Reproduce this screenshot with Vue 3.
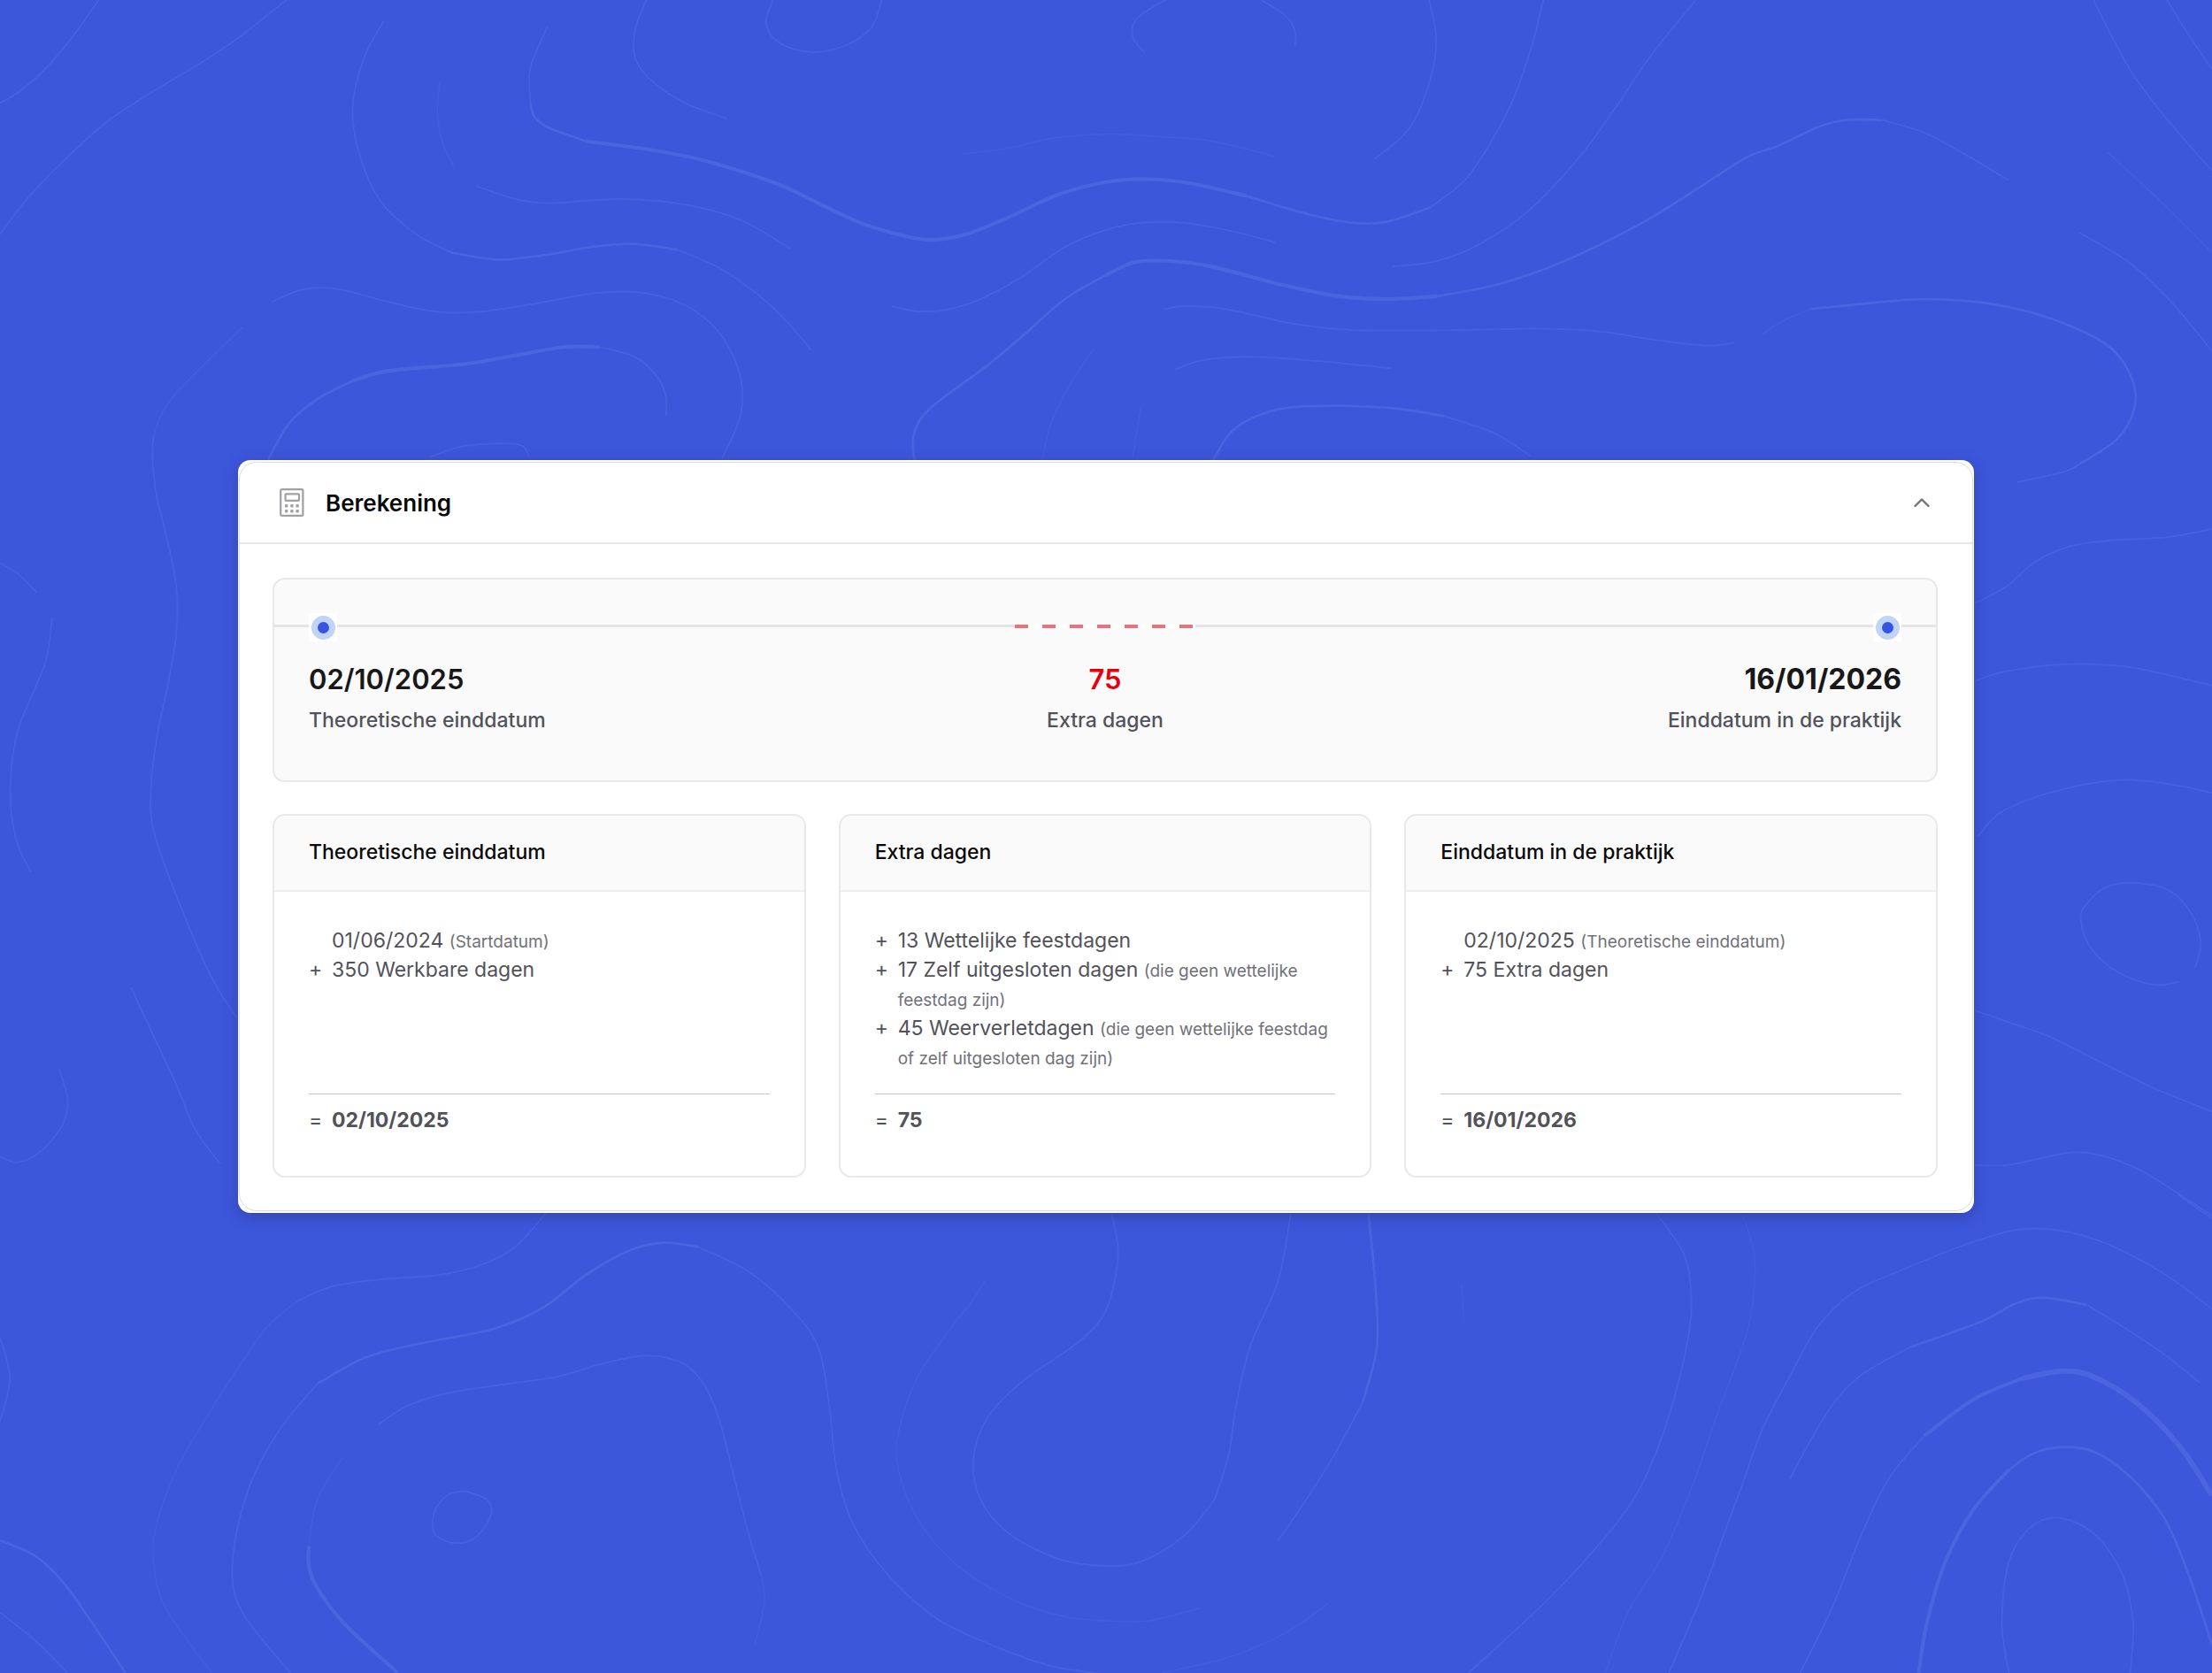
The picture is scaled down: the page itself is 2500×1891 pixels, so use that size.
<script setup>
import { ref } from 'vue'

const open = ref(true)

const milestones = [
  { kind: 'start', value: '02/10/2025', label: 'Theoretische einddatum' },
  { kind: 'extra', value: '75', label: 'Extra dagen' },
  { kind: 'end', value: '16/01/2026', label: 'Einddatum in de praktijk' },
]

const cards = [
  {
    title: 'Theoretische einddatum',
    rows: [
      { sign: '', text: '01/06/2024', note: '(Startdatum)' },
      { sign: '+', text: '350 Werkbare dagen', note: '' },
    ],
    total: '02/10/2025',
  },
  {
    title: 'Extra dagen',
    rows: [
      { sign: '+', text: '13 Wettelijke feestdagen', note: '' },
      { sign: '+', text: '17 Zelf uitgesloten dagen', note: '(die geen wettelijke feestdag zijn)' },
      { sign: '+', text: '45 Weerverletdagen', note: '(die geen wettelijke feestdag of zelf uitgesloten dag zijn)' },
    ],
    total: '75',
  },
  {
    title: 'Einddatum in de praktijk',
    rows: [
      { sign: '', text: '02/10/2025', note: '(Theoretische einddatum)' },
      { sign: '+', text: '75 Extra dagen', note: '' },
    ],
    total: '16/01/2026',
  },
]

// Contour lines of the backdrop: [weight, "x,y x,y ..."]
const contours = [
  [1, '70,0 50,28 30,51 12,66 0,73'],
  [1, '203,0 170,26 145,43 105,67 75,87 45,114 20,140 0,166'],
  [1, '272,15 258,41 250,76 255,110 270,143 295,166 320,179'],
  [2, '320,179 352,184 385,181 420,175 450,173 480,177'],
  [1, '480,177 510,190 535,207 555,225 575,248'],
  [0, '312,58 310,80 314,102 322,118'],
  [1, '338,132 365,141 390,144 440,141 485,145 525,156 560,176'],
  [1, '388,19 376,48 376,73'],
  [2, '376,73 379,83 390,91 415,100'],
  [3, '415,100 460,106 500,114 550,130 580,144 610,158 640,167 660,170 685,166 715,154 750,138 784,129 814,127 844,130 884,139'],
  [2, '884,139 924,151 959,158 984,157 1014,147'],
  [1, '1014,147 1039,127 1059,97 1074,67 1086,32 1094,0'],
  [1, '458,0 450,22 451,43 465,60 488,74 515,84'],
  [1, '548,0 543,16 552,30 575,37 600,32 618,19 625,0'],
  [0, '682,109 715,105 740,99 765,96 790,95 824,97 859,100 904,111'],
  [1, '193,214 215,205 240,205 275,214 310,221 340,221 375,216 420,208 450,207 475,212 495,222 513,240 525,268 525,294 512,325'],
  [0, '172,232 135,268 117,289 109,309'],
  [1, '109,309 108,323 111,351 118,380 125,416 125,449 119,485 111,524 107,560 108,585 117,614 134,657 150,693 168,722'],
  [2, '190,326 205,300 225,283 250,270'],
  [3, '250,270 275,263 330,258 365,252 400,246 425,246'],
  [1, '425,246 450,253 465,266 472,281 472,295'],
  [1, '305,324 330,316 367,315 375,324'],
  [1, '632,217 655,221 685,216 720,199 755,175 784,163 809,158 839,158 874,164 904,172'],
  [2, '648,326 648,307 660,289 700,259 725,238 755,212 784,195'],
  [3, '784,195 804,186 829,185 859,189 909,202 949,210 984,212 1019,210'],
  [2, '1019,210 1064,201 1109,185 1164,158 1209,130 1239,111 1259,104 1289,90 1309,85 1334,85'],
  [1, '1334,85 1364,94 1394,110 1424,128'],
  [0, '739,326 745,300 760,270 775,248'],
  [1, '826,0 806,13 803,26 811,37'],
  [1, '894,0 911,11 918,22 918,32'],
  [1, '1013,0 1018,26 1014,56 999,91 974,113'],
  [1, '1202,0 1169,41 1144,78 1119,112 1084,149 1049,173 1019,185 987,189'],
  [1, '825,219 844,217 874,220 914,229 959,234 1034,234 1094,233 1134,235 1174,241 1209,245 1229,243'],
  [0, '1249,237 1265,227 1284,219'],
  [2, '1284,219 1324,215 1364,212 1409,215 1454,226 1494,245 1511,268 1513,289 1501,311 1474,329'],
  [1, '1474,329 1464,334 1430,342'],
  [1, '833,262 854,255 889,253 934,256 986,261'],
  [2, '860,326 874,305 899,292 929,288 984,289 1024,295'],
  [1, '1024,295 1059,307 1086,324'],
  [1, '1484,0 1509,48 1534,82 1568,121'],
  [1, '1536,0 1551,24 1568,49'],
  [0, '1494,108 1534,145 1568,179'],
  [1, '1474,165 1509,186 1539,214 1568,249'],
  [0, '809,287 803,324'],
  [1, '0,399 13,407 26,420'],
  [1, '37,438 33,467 23,492 13,517 8,546 8,575 13,600 22,618'],
  [1, '93,700 104,724 125,769 138,800 156,825'],
  [1, '42,758 48,780 44,798 29,816 13,824 0,820'],
  [1, '1399,428 1422,416 1443,398 1468,387 1497,383 1535,381 1568,375'],
  [1, '1399,483 1422,476 1464,471 1510,473 1568,486'],
  [1, '1402,593 1418,576 1453,562 1501,553 1539,556 1568,562'],
  [1, '1556,686 1560,668 1553,647 1537,631 1514,626 1493,629 1479,641 1475,652 1482,672 1501,689 1526,698 1545,696'],
  [1, '1399,716 1422,724 1453,735 1485,751 1526,771 1568,788'],
  [1, '1399,826 1422,826 1443,822 1468,817 1489,819 1516,829 1547,848 1568,862'],
  [1, '387,860 365,884 340,897 310,904 270,907 235,912 210,923'],
  [0, '210,923 190,940 170,968 145,1007 125,1042 111,1081 109,1107 117,1139 150,1186'],
  [1, '206,1186 175,1148 165,1122 168,1085 180,1046 200,1011 225,981'],
  [2, '225,981 260,962 300,952 350,942 385,927 415,904 445,887 470,881 495,884'],
  [1, '495,884 530,901 560,927 580,955 588,998 593,1042 605,1081 630,1117 665,1148 710,1169 745,1181 784,1187'],
  [0, '824,1186 874,1174 914,1156 941,1137'],
  [1, '268,1010 290,996 320,987 360,981 395,976 430,966 460,961 485,967 500,983 510,1007 520,1046 530,1085 540,1118'],
  [0, '540,1118 542,1132 540,1146 535,1166'],
  [0, '243,1033 225,1063 219,1096'],
  [3, '219,1096 219,1110 225,1126 245,1152 282,1186'],
  [1, '330,1057 345,1063 348,1074 338,1089 323,1094 308,1087 308,1072 317,1060 330,1057'],
  [2, '0,1092 25,1103 45,1122 65,1150 89,1186'],
  [1, '0,1143 25,1163 48,1186'],
  [1, '0,948 7,977 0,1008'],
  [0, '698,908 690,921 670,947 650,977 638,1011 636,1037 650,1076 680,1111 720,1135 755,1146 784,1149 814,1149 851,1140'],
  [1, '788,860 792,880 792,897 784,929 765,951 725,979 700,1005 690,1035 695,1063 715,1087 750,1105 784,1110 809,1107 839,1089 861,1063'],
  [1, '861,1063 871,1031 876,998 886,955 906,908 915,860'],
  [2, '970,860 975,912 976,955 966,994'],
  [1, '966,994 946,1031 924,1066 906,1092'],
  [0, '1036,910 1038,938'],
  [1, '1174,860 1194,890 1199,925 1194,962 1179,1016 1159,1061 1129,1100 1094,1137 1041,1186'],
  [0, '1236,862 1244,895 1239,942 1219,998 1199,1055 1179,1102 1154,1143 1138,1186'],
  [1, '1568,928 1534,903 1494,882 1459,872 1429,872 1394,882 1349,900 1314,916 1289,940 1269,975 1249,1014 1234,1055 1219,1096 1204,1137 1183,1186'],
  [1, '1559,980 1534,960 1504,940 1479,925'],
  [2, '1479,925 1449,920 1429,924 1404,937 1354,955'],
  [1, '1354,955 1319,975 1299,996 1284,1020 1269,1048'],
  [1, '1276,1186 1299,1139 1319,1089 1339,1048 1364,1018'],
  [3, '1364,1018 1399,992 1434,977'],
  [4, '1434,977 1462,972 1484,976 1514,994 1544,1024 1568,1060'],
  [3, '1360,1186 1366,1150 1379,1107 1399,1070 1424,1042'],
  [2, '1424,1042 1440,1031 1459,1026 1484,1029 1509,1046 1534,1076 1551,1115 1568,1166'],
  [1, '1424,1186 1419,1150 1424,1107 1439,1083 1459,1076 1484,1087 1504,1115 1512,1150 1510,1186'],
  [1, '1544,847 1568,864'],
]

// Smooth curve through the given points
function smooth(text) {
  const p = text.split(' ').map((pair) => pair.split(',').map(Number))
  let d = `M${p[0][0]} ${p[0][1]}`
  for (let i = 0; i < p.length - 1; i++) {
    const a = p[i - 1] || p[i]
    const b = p[i]
    const c = p[i + 1]
    const e = p[i + 2] || c
    d += `C${b[0] + (c[0] - a[0]) / 6} ${b[1] + (c[1] - a[1]) / 6} ${c[0] - (e[0] - b[0]) / 6} ${c[1] - (e[1] - b[1]) / 6} ${c[0]} ${c[1]}`
  }
  return d
}

const lines = contours.map(([weight, points]) => ({ weight, d: smooth(points) }))
</script>

<template>
  <main class="page">
    <svg class="backdrop" viewBox="0 0 1568 1186" preserveAspectRatio="xMidYMid slice" aria-hidden="true">
      <path v-for="(line, i) in lines" :key="i" :d="line.d" :class="`w${line.weight}`" />
    </svg>

    <section class="panel" aria-labelledby="panel-title">
      <div class="panel-inner">
        <header class="panel-head">
          <svg class="calc" viewBox="0 0 28 32" aria-hidden="true">
            <rect x="1.2" y="1.2" width="25.2" height="29.6" rx="1.4" />
            <rect x="6.6" y="6.4" width="15.4" height="7.4" rx=".8" />
            <g class="keys">
              <rect x="6" y="18" width="3.4" height="3.4" rx="1" />
              <rect x="12.2" y="18" width="3.4" height="3.4" rx="1" />
              <rect x="18.4" y="18" width="3.4" height="3.4" rx="1" />
              <rect x="6" y="24" width="3.4" height="3.4" rx="1" />
              <rect x="12.2" y="24" width="3.4" height="3.4" rx="1" />
              <rect x="18.4" y="24" width="3.4" height="3.4" rx="1" />
            </g>
          </svg>
          <h2 id="panel-title">Berekening</h2>
          <button type="button" class="toggle" :aria-expanded="open" aria-label="Inklappen" @click="open = !open">
            <svg viewBox="0 0 18 12" aria-hidden="true"><path d="M1.5 10 9 2.5 16.5 10" /></svg>
          </button>
        </header>

        <div v-if="open" class="panel-body">
          <div class="timeline">
            <div class="track">
              <span class="stop"></span>
              <span class="dashes"></span>
              <span class="stop"></span>
            </div>
            <div class="milestones">
              <div v-for="m in milestones" :key="m.kind" class="milestone" :class="m.kind">
                <strong>{{ m.value }}</strong>
                <span>{{ m.label }}</span>
              </div>
            </div>
          </div>

          <div class="cards">
            <article v-for="card in cards" :key="card.title" class="card">
              <h3>{{ card.title }}</h3>
              <div class="card-body">
                <ul>
                  <li v-for="row in card.rows" :key="row.text">
                    <span class="sign">{{ row.sign }}</span>
                    <span>{{ row.text }} <small v-if="row.note">{{ row.note }}</small></span>
                  </li>
                </ul>
                <p class="total">
                  <span class="sign">=</span>
                  <strong>{{ card.total }}</strong>
                </p>
              </div>
            </article>
          </div>
        </div>
      </div>
    </section>
  </main>
</template>

<style>
body {
  margin: 0;
}
</style>

<style scoped>
.page {
  position: relative;
  display: flex;
  flex-direction: column;
  justify-content: center;
  box-sizing: border-box;
  min-height: 100vh;
  padding: 40px 269px;
  overflow: hidden;
  background: #3d57db;
  color: #52525b;
  font-family: Inter, "Liberation Sans", sans-serif;
  font-size: 23px;
  line-height: 33px;
}

.backdrop {
  position: absolute;
  inset: 0;
  width: 100%;
  height: 100%;
  fill: none;
  stroke: #4b64e0;
}

.w0 { stroke: #435ddd; stroke-width: 1; }
.w1 { stroke: #4862df; stroke-width: 1.1; }
.w2 { stroke-width: 1.7; }
.w3 { stroke-width: 2.6; }
.w4 { stroke-width: 3.8; }

.panel {
  position: relative;
  padding: 2px 1px;
  border-radius: 14px;
  background: #fff;
  box-shadow: 0 4px 16px rgba(30, 35, 90, 0.35);
}

.panel-inner {
  border: 1px solid #dcdcde;
  border-radius: 20px;
}

.panel-head {
  display: flex;
  align-items: center;
  height: 90px;
  padding: 0 44px 0 45px;
  border-bottom: 2px solid #e8e8ea;
}

.calc {
  width: 28px;
  height: 32px;
  fill: none;
  stroke: #a0a0a9;
  stroke-width: 2.2;
}

.keys {
  fill: #a0a0a9;
  stroke: none;
}

h2,
h3,
p,
ul {
  margin: 0;
  padding: 0;
}

h2 {
  flex: 1;
  margin-left: 24px;
  color: #09090b;
  font-size: 26px;
  font-weight: 600;
}

.toggle {
  display: flex;
  padding: 4px;
  border: 0;
  background: none;
  cursor: pointer;
}

.toggle svg {
  width: 18px;
  height: 12px;
  fill: none;
  stroke: #71717a;
  stroke-width: 2.4;
  stroke-linecap: round;
  stroke-linejoin: round;
}

.panel-body {
  display: flex;
  flex-direction: column;
  gap: 36px;
  padding: 38px 39px 37px 37px;
}

.timeline {
  padding: 38px 0 51px;
  border: 2px solid #e8e8ea;
  border-radius: 14px;
  background: #fafafa;
}

.track {
  display: flex;
  align-items: center;
  justify-content: space-between;
  height: 32px;
  padding: 0 39px;
  background: linear-gradient(#e4e4e7, #e4e4e7) 0 13px / 100% 3px no-repeat;
}

.stop {
  display: flex;
  align-items: center;
  justify-content: center;
  width: 32px;
  height: 32px;
  background: #fff;
}

.stop::before {
  width: 13px;
  height: 13px;
  border: 7px solid #bfd3fb;
  border-radius: 50%;
  background: #3654e0;
  content: "";
}

.dashes {
  align-self: flex-start;
  width: 204px;
  height: 4px;
  margin-top: 13px;
  background: repeating-linear-gradient(90deg, #e8747b 0 15px, #fff 15px 31px);
}

.milestones {
  display: grid;
  grid-template-columns: 1fr auto 1fr;
  padding: 23px 39px 0;
}

.milestone {
  display: flex;
  flex-direction: column;
  gap: 10px;
}

.milestone strong {
  color: #18181b;
  font-size: 31px;
  font-weight: 600;
  line-height: 40px;
}

.milestone span {
  font-weight: 500;
}

.milestone.extra {
  align-items: center;
}

.milestone.extra strong {
  color: #e7000b;
}

.milestone.end {
  align-items: flex-end;
}

.milestone.end strong {
  font-size: 32px;
  font-weight: 700;
}

.cards {
  display: grid;
  grid-template-columns: repeat(3, 1fr);
  gap: 37px;
}

.card {
  display: flex;
  flex-direction: column;
  border: 2px solid #e8e8ea;
  border-radius: 14px;
  overflow: hidden;
}

h3 {
  padding: 25px 39px 26px;
  border-bottom: 2px solid #efeff0;
  background: #fafafa;
  color: #09090b;
  font-size: 23px;
  font-weight: 500;
}

.card-body {
  display: flex;
  flex: 1;
  flex-direction: column;
  gap: 24px;
  padding: 39px 39px 46px;
}

ul {
  flex: 1;
  list-style: none;
}

li,
.total {
  display: grid;
  grid-template-columns: 26px 1fr;
}

small {
  color: #71717a;
  font-size: 19px;
  line-height: 19px;
}

.total {
  padding-top: 13px;
  border-top: 1px solid #c6c6ca;
}

.total strong {
  font-weight: 700;
}
</style>
